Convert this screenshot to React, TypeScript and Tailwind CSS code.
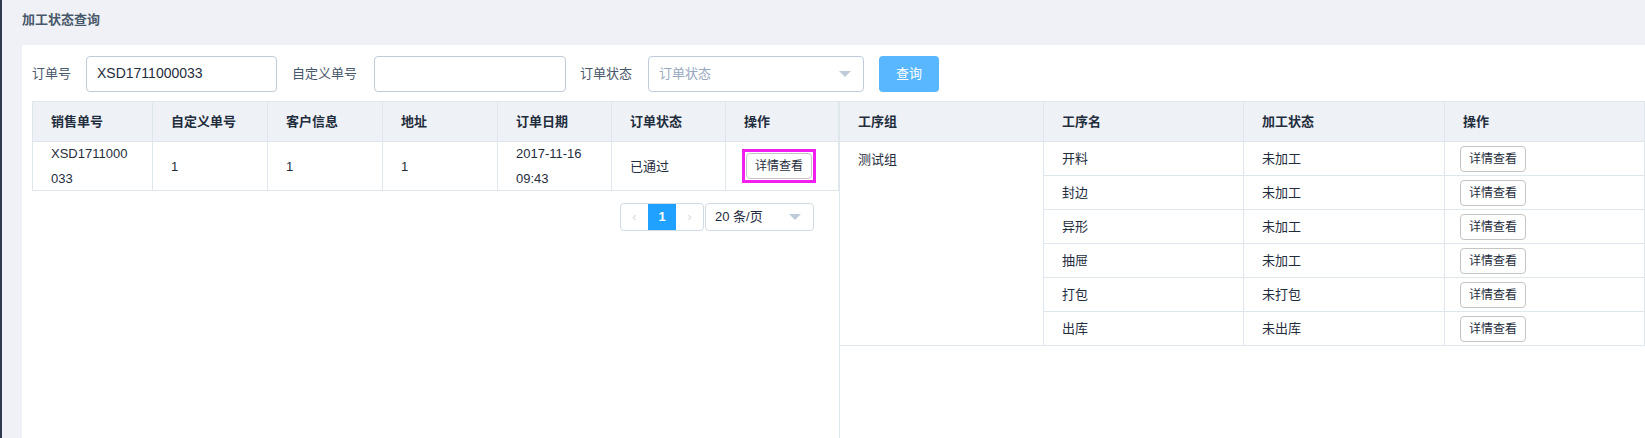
const font = { fontFamily: '"Liberation Sans", "Noto Sans CJK SC", sans-serif' };

const leftCols = [120, 115, 115, 115, 114, 114, 113];
const leftHead = ["销售单号", "自定义单号", "客户信息", "地址", "订单日期", "订单状态", "操作"];
const rightCols = [204, 200, 201, 200];
const rightHead = ["工序组", "工序名", "加工状态", "操作"];
const steps = [
  ["测试组", "开料", "未加工"],
  ["", "封边", "未加工"],
  ["", "异形", "未加工"],
  ["", "抽屉", "未加工"],
  ["", "打包", "未打包"],
  ["", "出库", "未出库"],
];

const DetailBtn = () => (
  <button className="h-[26px] w-[66px] rounded border border-[#c4c4c4] bg-white text-[12px] text-[#1f2d3d]">详情查看</button>
);

export default function App() {
  return (
    <div style={font} className="flex h-[438px] w-[1645px] overflow-hidden bg-[#eff1f6] text-[13px] text-[#1f2d3d]">
      <div className="w-[2px] shrink-0 bg-[#2f3a4f]" />
      <div className="flex flex-1 flex-col pl-[20px]">
        <div className="flex h-[45px] items-center pb-[6px] text-[13px] font-bold text-[#48576a]">加工状态查询</div>
        <div className="flex flex-1 flex-col bg-white pl-[10px]">
          <div className="flex h-[56px] items-center pt-[1px]">
            <span className="w-[54px] text-[#48576a]">订单号</span>
            <div className="flex h-[36px] w-[191px] items-center rounded border border-[#bfcbd9] px-[10px] text-[14px]">XSD1711000033</div>
            <span className="ml-[15px] w-[82px] text-[#48576a]">自定义单号</span>
            <div className="h-[36px] w-[192px] rounded border border-[#bfcbd9]" />
            <span className="ml-[14px] w-[68px] text-[#48576a]">订单状态</span>
            <div className="flex h-[36px] w-[216px] items-center justify-between rounded border border-[#bfcbd9] pl-[10px] pr-[12px] text-[#97a8be]">
              订单状态
              <span className="h-0 w-0 border-x-[6px] border-t-[6px] border-x-transparent border-t-[#bfcbd9]" />
            </div>
            <button className="ml-[15px] h-[36px] w-[60px] rounded bg-[#58b7ff] text-white">查询</button>
          </div>
          <div className="flex flex-1">
            <div className="flex w-[807px] flex-col">
              <div className="border-t border-l border-[#dfe6ec]">
                <div className="flex h-[40px] bg-[#eef1f6] font-bold">
                  {leftHead.map((h, i) => (
                    <div key={h} style={{ width: leftCols[i] }} className="flex items-center border-r border-b border-[#dfe6ec] pl-[18px]">{h}</div>
                  ))}
                </div>
                <div className="flex h-[49px]">
                  {["XSD1711000\n033", "1", "1", "1", "2017-11-16\n09:43", "已通过"].map((t, i) => (
                    <div key={i} style={{ width: leftCols[i] }} className="flex items-center whitespace-pre border-r border-b border-[#dfe6ec] pl-[18px] leading-[25px]">{t}</div>
                  ))}
                  <div style={{ width: leftCols[6] }} className="flex items-center border-r border-b border-[#dfe6ec] pl-[16px]">
                    <div className="border-[3px] border-[#f01ff0] p-[1px]"><DetailBtn /></div>
                  </div>
                </div>
              </div>
              <div className="mt-[12px] flex justify-end pr-[25px]">
                <div className="flex h-[28px] rounded-sm border border-[#d1dbe5] text-[13px]">
                  <span className="flex w-[27px] items-center justify-center text-[#d9d9d9]">‹</span>
                  <span className="flex w-[28px] items-center justify-center bg-[#20a0ff] font-bold text-white">1</span>
                  <span className="flex w-[27px] items-center justify-center text-[#d9d9d9]">›</span>
                </div>
                <div className="ml-[1px] flex h-[28px] w-[109px] items-center justify-between rounded-sm border border-[#d1dbe5] pl-[9px] pr-[12px]">
                  20 条/页
                  <span className="h-0 w-0 border-x-[6px] border-t-[6px] border-x-transparent border-t-[#bfcbd9]" />
                </div>
              </div>
            </div>
            <div className="flex-1 border-l border-[#dfe6ec]">
              <div className="border-t border-[#dfe6ec]">
                <div className="flex h-[40px] bg-[#eef1f6] font-bold">
                  {rightHead.map((h, i) => (
                    <div key={h} style={{ width: rightCols[i] }} className="flex items-center border-r border-b border-[#dfe6ec] pl-[18px]">{h}</div>
                  ))}
                </div>
                {steps.map((r, ri) => (
                  <div key={ri} className="flex h-[34px]">
                    <div style={{ width: rightCols[0] }} className={`flex items-start border-r border-[#dfe6ec] pt-[8px] pl-[18px] ${ri === 5 ? "border-b" : ""}`}>{r[0]}</div>
                    <div style={{ width: rightCols[1] }} className="flex items-center border-r border-b border-[#dfe6ec] pl-[18px]">{r[1]}</div>
                    <div style={{ width: rightCols[2] }} className="flex items-center border-r border-b border-[#dfe6ec] pl-[18px]">{r[2]}</div>
                    <div style={{ width: rightCols[3] }} className="flex items-center border-r border-b border-[#dfe6ec] pl-[15px]"><DetailBtn /></div>
                  </div>
                ))}
              </div>
            </div>
          </div>
        </div>
      </div>
    </div>
  );
}
